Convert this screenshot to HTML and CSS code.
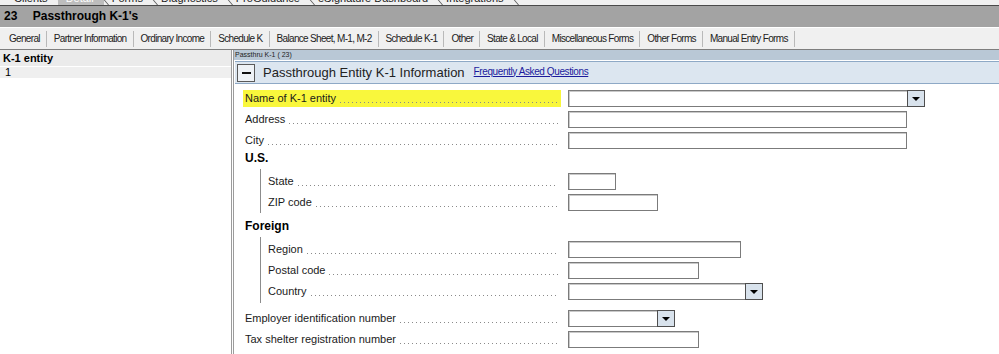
FILE: index.html
```html
<!DOCTYPE html>
<html>
<head>
    <title>Passthrough K-1's</title>
    <link rel="stylesheet" href="styles.css">
</head>
<body>
    <!-- Application tabs (only their lower edge shows) -->
    <div class="app-tabs">
        <span class="app-tab">Clients</span>
        <span class="app-tab active">Detail</span>
        <span class="app-tab">Forms</span>
        <span class="app-tab">Diagnostics</span>
        <span class="app-tab">ProGuidance</span>
        <span class="app-tab">eSignature Dashboard</span>
        <span class="app-tab">Integrations</span>
    </div>

    <div class="title-bar">
        <span class="screen-no">23</span>
        <span>Passthrough K-1's</span>
    </div>

    <div class="form-tabs">
        <span class="form-tab">General</span>
        <span class="form-tab">Partner Information</span>
        <span class="form-tab">Ordinary Income</span>
        <span class="form-tab">Schedule K</span>
        <span class="form-tab">Balance Sheet, M-1, M-2</span>
        <span class="form-tab">Schedule K-1</span>
        <span class="form-tab">Other</span>
        <span class="form-tab">State &amp; Local</span>
        <span class="form-tab">Miscellaneous Forms</span>
        <span class="form-tab">Other Forms</span>
        <span class="form-tab">Manual Entry Forms</span>
    </div>

    <div class="main">
        <div class="sidebar">
            <div class="side-head">K-1 entity</div>
            <div class="side-row">1</div>
        </div>

        <div class="form">
            <div class="form-caption">Passthru K-1 ( 23)</div>
            <div class="section-head">
                <span class="toggle"></span>
                <span class="section-title">Passthrough Entity K-1 Information</span>
                <a class="faq" href="#">Frequently Asked Questions</a>
            </div>

            <div class="fields">
                <div class="row">
                    <label class="label current"><span>Name of K-1 entity</span><i class="dots"></i></label>
                    <div class="combo w-name"><input type="text"><span class="arrow"></span></div>
                </div>
                <div class="row">
                    <label class="label"><span>Address</span><i class="dots"></i></label>
                    <input class="box w-long" type="text">
                </div>
                <div class="row">
                    <label class="label"><span>City</span><i class="dots"></i></label>
                    <input class="box w-long" type="text">
                </div>

                <div class="heading us">U.S.</div>
                <div class="group">
                    <div class="row">
                        <label class="label"><span>State</span><i class="dots"></i></label>
                        <input class="box w-state" type="text">
                    </div>
                    <div class="row">
                        <label class="label"><span>ZIP code</span><i class="dots"></i></label>
                        <input class="box w-zip" type="text">
                    </div>
                </div>

                <div class="heading foreign">Foreign</div>
                <div class="group">
                    <div class="row">
                        <label class="label"><span>Region</span><i class="dots"></i></label>
                        <input class="box w-region" type="text">
                    </div>
                    <div class="row">
                        <label class="label"><span>Postal code</span><i class="dots"></i></label>
                        <input class="box w-postal" type="text">
                    </div>
                    <div class="row">
                        <label class="label"><span>Country</span><i class="dots"></i></label>
                        <div class="combo w-country"><input type="text"><span class="arrow"></span></div>
                    </div>
                </div>

                <div class="row after-group">
                    <label class="label"><span>Employer identification number</span><i class="dots"></i></label>
                    <div class="combo w-ein"><input type="text"><span class="arrow"></span></div>
                </div>
                <div class="row">
                    <label class="label"><span>Tax shelter registration number</span><i class="dots"></i></label>
                    <input class="box w-postal" type="text">
                </div>
            </div>
        </div>
    </div>
</body>
</html>
```

FILE: styles.css
```css
* {
    box-sizing: border-box;
}
body {
    margin: 0;
    width: 999px;
    height: 354px;
    overflow: hidden;
    font-family: "Liberation Sans", Arial, sans-serif;
    color: #000;
    background: #fff;
}

/* top application tabs, cut off by the window */
.app-tabs {
    height: 6px;
    overflow: hidden;
    display: flex;
    padding-left: 6px;
    background: #f0f0f0;
    border-bottom: 1px solid #4a4a4a;
}
.app-tab {
    position: relative;
    margin-top: -7px;
    padding: 0 10px 0 8px;
    font-size: 11px;
    line-height: 11px;
    color: #222;
}
.app-tab::after {
    content: "";
    position: absolute;
    right: 0;
    top: 0;
    bottom: 0;
    border-right: 1px solid #555;
    transform: skewX(40deg);
}
.app-tab.active {
    background: #bdbdbd;
    color: #fff;
}

.title-bar {
    height: 21px;
    line-height: 20px;
    padding-left: 4px;
    background: #a3a3a3;
    font-size: 12px;
    font-weight: bold;
}
.screen-no {
    margin-right: 12px;
}

.form-tabs {
    height: 23px;
    display: flex;
    align-items: center;
    padding-left: 2px;
    background: #f0f0f0;
    border-top: 1px solid #fff;
    border-bottom: 1px solid #7e7e7e;
}
.form-tab {
    height: 16px;
    line-height: 16px;
    padding: 0 6px 0 7px;
    font-size: 10px;
    letter-spacing: -0.68px;
    color: #222;
    border-right: 1px solid #b9b9b9;
}

.main {
    display: flex;
    height: 304px;
}
.sidebar {
    width: 231px;
    flex: none;
}
.side-head {
    height: 17px;
    line-height: 16px;
    padding-left: 3px;
    font-size: 11px;
    font-weight: bold;
    background: #ebebeb;
    border-bottom: 1px solid #fff;
}
.side-row {
    height: 11px;
    line-height: 11px;
    padding-left: 5px;
    font-size: 11px;
    background: #efefef;
}

.form {
    flex: 1;
    border-left: 3px double #9c9c9c;
}
.form-caption {
    height: 10px;
    line-height: 10px;
    padding-left: 1px;
    font-size: 7px;
    color: #222;
    background: #b9c8d6;
}
.section-head {
    height: 23px;
    margin: 1px 0 0 1px;
    display: flex;
    align-items: center;
    background: #dce6f0;
    border-top: 1px solid #8ea9c6;
    border-bottom: 1px solid #8ea9c6;
}
.toggle {
    width: 18px;
    height: 18px;
    margin-left: 2px;
    display: flex;
    align-items: center;
    justify-content: center;
    background: #eef2f6;
    border: 1px solid #5a5a5a;
}
.toggle::before {
    content: "";
    width: 9px;
    height: 2px;
    background: #111;
}
.section-title {
    margin-left: 8px;
    font-size: 13px;
    color: #222;
}
.faq {
    margin-left: 9px;
    margin-top: -3px;
    font-size: 10px;
    letter-spacing: -0.4px;
    color: #1b1b9c;
}

.fields {
    padding: 6px 0 0 9px;
}
.row {
    display: flex;
    height: 17px;
    margin-top: 4px;
}
.fields > .row:first-child,
.group > .row:first-child {
    margin-top: 0;
}
.label {
    width: 318px;
    display: flex;
    padding: 0 3px 0 2px;
    font-size: 11px;
    line-height: 17px;
    color: #1a1a1a;
}
.label.current {
    background: #f9f73c;
}
.dots {
    flex: 1;
    margin-left: 3px;
    background-image: linear-gradient(to right, #8a8a8a 1px, transparent 1px);
    background-size: 4px 1px;
    background-repeat: repeat-x;
    background-position: 1px 12px;
}

.heading {
    height: 14px;
    line-height: 14px;
    padding-left: 2px;
    font-size: 12px;
    font-weight: bold;
}
.heading.us {
    margin-top: 2px;
}
.heading.foreign {
    margin-top: 6px;
}
.group {
    margin: 4px 0 0 17px;
    padding: 4px 0 2px 5px;
    border-left: 1px solid #8c8c8c;
}
.heading.foreign + .group {
    padding-bottom: 3px;
}
.group .label {
    width: 295px;
}
.after-group {
    margin-top: 7px;
}

.box,
.combo {
    height: 17px;
    margin-left: 7px;
    border: 1px solid #7b7b7b;
    box-shadow: inset 1px 1px 0 #c9c9c9;
    background: #fff;
}
.box {
    padding: 0;
    font: inherit;
}
.combo {
    display: flex;
}
.combo input {
    flex: 1;
    min-width: 0;
    border: none;
    background: transparent;
}
.arrow {
    width: 18px;
    margin: -1px -1px -1px 0;
    display: flex;
    align-items: center;
    justify-content: center;
    background: #d8e2ec;
    border: 1px solid #4e4e4e;
}
.arrow::before {
    content: "";
    border-left: 4px solid transparent;
    border-right: 4px solid transparent;
    border-top: 4px solid #000;
}

.w-name { width: 357px; }
.w-long { width: 339px; }
.w-state { width: 48px; }
.w-zip { width: 90px; }
.w-region { width: 173px; }
.w-postal { width: 131px; }
.w-country { width: 195px; }
.w-ein { width: 107px; }
```
